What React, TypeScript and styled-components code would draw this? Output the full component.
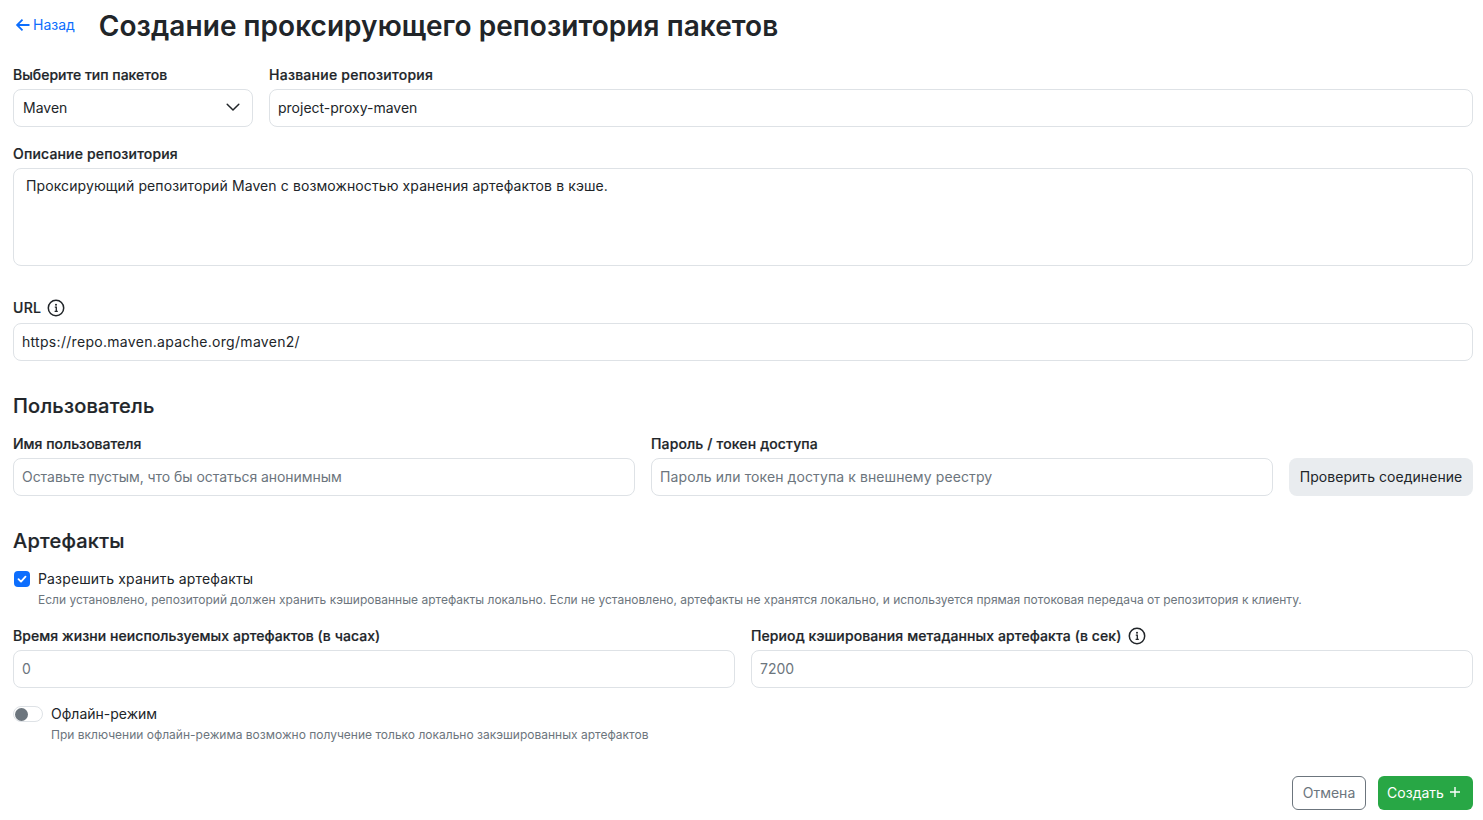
import React from 'react';
import styled, { createGlobalStyle } from 'styled-components';

const Global = createGlobalStyle`
  html, body { margin: 0; padding: 0; background: #fff; }
  body { font-family: Inter, "Noto Sans", sans-serif; font-size: 14px; color: #212529; }
  * { box-sizing: border-box; }
`;

const Page = styled.div`
  display: flex;
  flex-direction: column;
  width: 1483px;
  height: 820px;
  padding: 0 10px 0 13px;
`;
const Header = styled.header`
  display: flex;
  align-items: center;
  height: 52px;
  gap: 24px;
  margin-bottom: 13px;
`;
const Back = styled.a`
  display: flex;
  align-items: center;
  gap: 2px;
  margin-left: 2px;
  color: #0d6efd;
  font-size: 14px;
  line-height: 20px;
  margin-top: -2px;
`;
const Title = styled.h1`
  margin: 0;
  font-size: 28px;
  line-height: 34px;
  font-weight: 600;
  letter-spacing: 0.05px;
  color: #212529;
`;
const Row = styled.div<{ $cols: string; $mt?: number }>`
  display: grid;
  grid-template-columns: ${(p) => p.$cols};
  column-gap: 16px;
  align-items: end;
  margin-top: ${(p) => p.$mt ?? 0}px;
`;
const Field = styled.div<{ $mt?: number }>`
  display: flex;
  flex-direction: column;
  min-width: 0;
  margin-top: ${(p) => p.$mt ?? 0}px;
`;
const Label = styled.label<{ $ls?: number; $mb?: number }>`
  display: flex;
  align-items: center;
  gap: 6px;
  height: 20px;
  margin-bottom: ${(p) => p.$mb ?? 4}px;
  font-size: 14px;
  line-height: 20px;
  font-weight: 500;
  letter-spacing: ${(p) => p.$ls ?? 0}px;
  color: #212529;
  -webkit-text-stroke: 0.2px #212529;
`;
const InputBox = styled.div<{ $placeholder?: boolean; $ls?: number }>`
  display: flex;
  align-items: center;
  justify-content: space-between;
  height: 38px;
  padding: 0 8px 2px;
  border: 1px solid #dee2e6;
  border-radius: 8px;
  background: #fff;
  font-size: 14px;
  letter-spacing: ${(p) => p.$ls ?? 0}px;
  color: ${(p) => (p.$placeholder ? '#6c757d' : '#212529')};
  white-space: nowrap;
`;
const SelectBox = styled(InputBox)`
  padding-left: 9px;
  padding-right: 11px;
`;
const TextArea = styled.div`
  height: 98px;
  padding: 7px 12px;
  border: 1px solid #dee2e6;
  border-radius: 8px;
  font-size: 14px;
  line-height: 20px;
  letter-spacing: 0.1px;
  color: #212529;
`;
const SectionTitle = styled.h2<{ $mt: number }>`
  margin: ${(p) => p.$mt}px 0 0;
  font-size: 20px;
  line-height: 24px;
  font-weight: 500;
  letter-spacing: 0.22px;
  color: #212529;
  -webkit-text-stroke: 0.2px #212529;
`;
const CheckButton = styled.button`
  height: 38px;
  padding: 0 10px 2px;
  border: none;
  border-radius: 8px;
  background: #e9ecef;
  color: #212529;
  font-family: inherit;
  font-size: 14px;
  letter-spacing: 0.05px;
  white-space: nowrap;
`;
const OptionRow = styled.div<{ $gap: number; $mt: number; $ls?: number }>`
  display: flex;
  align-items: center;
  gap: ${(p) => p.$gap}px;
  height: 20px;
  margin-top: ${(p) => p.$mt}px;
  font-size: 14px;
  line-height: 20px;
  letter-spacing: ${(p) => p.$ls ?? 0}px;
  color: #212529;
`;
const Checkbox = styled.span`
  display: flex;
  align-items: center;
  justify-content: center;
  width: 16px;
  height: 16px;
  margin-left: 1px;
  border-radius: 4px;
  background: #0d6efd;
`;
const Switch = styled.span`
  display: flex;
  align-items: center;
  width: 30px;
  height: 16px;
  padding-left: 1px;
  border: 1px solid #dee2e6;
  border-radius: 8px;
  background: #fff;
`;
const Knob = styled.span`
  width: 13px;
  height: 13px;
  border-radius: 50%;
  background: #6c757d;
`;
const Hint = styled.div<{ $indent: number }>`
  margin: 3px 0 0 ${(p) => p.$indent}px;
  font-size: 12px;
  line-height: 16px;
  color: #6c757d;
  white-space: nowrap;
`;
const Footer = styled.footer`
  display: flex;
  justify-content: flex-end;
  gap: 12px;
  margin-top: 33px;
`;
const CancelButton = styled.button`
  width: 74px;
  height: 34px;
  padding: 0 0 2px;
  border: 1px solid #6c757d;
  border-radius: 6px;
  background: #fff;
  color: #6c757d;
  font-family: inherit;
  font-size: 14px;
`;
const CreateButton = styled.button`
  display: flex;
  align-items: center;
  justify-content: center;
  gap: 4px;
  width: 95px;
  height: 34px;
  padding: 0 2px 2px 0;
  border: none;
  border-radius: 6px;
  background: #28a745;
  color: #fff;
  font-family: inherit;
  font-size: 14px;
`;

const Info = () => (
  <svg width="18" height="18" viewBox="0 0 18 18" fill="none">
    <circle cx="9" cy="9" r="7.7" stroke="#212529" strokeWidth="1.5" />
    <circle cx="9" cy="5.7" r="1" fill="#212529" />
    <path d="M7.8 8.1h1.5v4.3M7.6 12.4h3.2" stroke="#212529" strokeWidth="1.3" />
  </svg>
);

export default function App() {
  return (
    <Page>
      <Global />
      <Header>
        <Back>
          <svg width="16" height="16" viewBox="0 0 16 16" fill="none">
            <path d="M14.5 8H2.5M7.5 2.6L2.1 8l5.4 5.4" stroke="#0d6efd" strokeWidth="1.8" />
          </svg>
          Назад
        </Back>
        <Title>Создание проксирующего репозитория пакетов</Title>
      </Header>
      <Row $cols="240px 1fr">
        <Field>
          <Label>Выберите тип пакетов</Label>
          <SelectBox>
            Maven
            <svg width="16" height="16" viewBox="0 0 16 16" fill="none">
              <path d="M2.2 5.2L8 11l5.8-5.8" stroke="#212529" strokeWidth="1.5" strokeLinecap="round" strokeLinejoin="round" />
            </svg>
          </SelectBox>
        </Field>
        <Field>
          <Label $ls={0.25}>Название репозитория</Label>
          <InputBox>project-proxy-maven</InputBox>
        </Field>
      </Row>
      <Field $mt={17}>
        <Label $ls={0.17}>Описание репозитория</Label>
        <TextArea>Проксирующий репозиторий Maven с возможностью хранения артефактов в кэше.</TextArea>
      </Field>
      <Field $mt={32}>
        <Label $mb={5} $ls={0.3}>
          URL
          <Info />
        </Label>
        <InputBox $ls={0.3}>https://repo.maven.apache.org/maven2/</InputBox>
      </Field>
      <SectionTitle $mt={33}>Пользователь</SectionTitle>
      <Row $cols="622px 622px 184px" $mt={16}>
        <Field>
          <Label>Имя пользователя</Label>
          <InputBox $placeholder $ls={-0.05}>Оставьте пустым, что бы остаться анонимным</InputBox>
        </Field>
        <Field>
          <Label $ls={0.14}>Пароль / токен доступа</Label>
          <InputBox $placeholder $ls={0.1}>Пароль или токен доступа к внешнему реестру</InputBox>
        </Field>
        <CheckButton>Проверить соединение</CheckButton>
      </Row>
      <SectionTitle $mt={33}>Артефакты</SectionTitle>
      <OptionRow $gap={8} $mt={16} $ls={0.15}>
        <Checkbox>
          <svg width="12" height="12" viewBox="0 0 12 12" fill="none">
            <path d="M2.5 6.2L5 8.6 9.5 3.6" stroke="#fff" strokeWidth="1.8" strokeLinecap="round" strokeLinejoin="round" />
          </svg>
        </Checkbox>
        Разрешить хранить артефакты
      </OptionRow>
      <Hint $indent={25}>
        Если установлено, репозиторий должен хранить кэшированные артефакты локально. Если не установлено, артефакты не хранятся локально, и используется прямая потоковая передача от репозитория к клиенту.
      </Hint>
      <Row $cols="1fr 1fr" $mt={18}>
        <Field>
          <Label $ls={0.06}>Время жизни неиспользуемых артефактов (в часах)</Label>
          <InputBox $placeholder>0</InputBox>
        </Field>
        <Field>
          <Label $ls={0.1}>
            Период кэширования метаданных артефакта (в сек)
            <Info />
          </Label>
          <InputBox $placeholder>7200</InputBox>
        </Field>
      </Row>
      <OptionRow $gap={8} $mt={16}>
        <Switch>
          <Knob />
        </Switch>
        Офлайн-режим
      </OptionRow>
      <Hint $indent={38}>При включении офлайн-режима возможно получение только локально закэшированных артефактов</Hint>
      <Footer>
        <CancelButton>Отмена</CancelButton>
        <CreateButton>
          Создать
          <svg width="14" height="14" viewBox="0 0 14 14" fill="none">
            <path d="M7 2v10M2 7h10" stroke="#fff" strokeWidth="1.4" />
          </svg>
        </CreateButton>
      </Footer>
    </Page>
  );
}
